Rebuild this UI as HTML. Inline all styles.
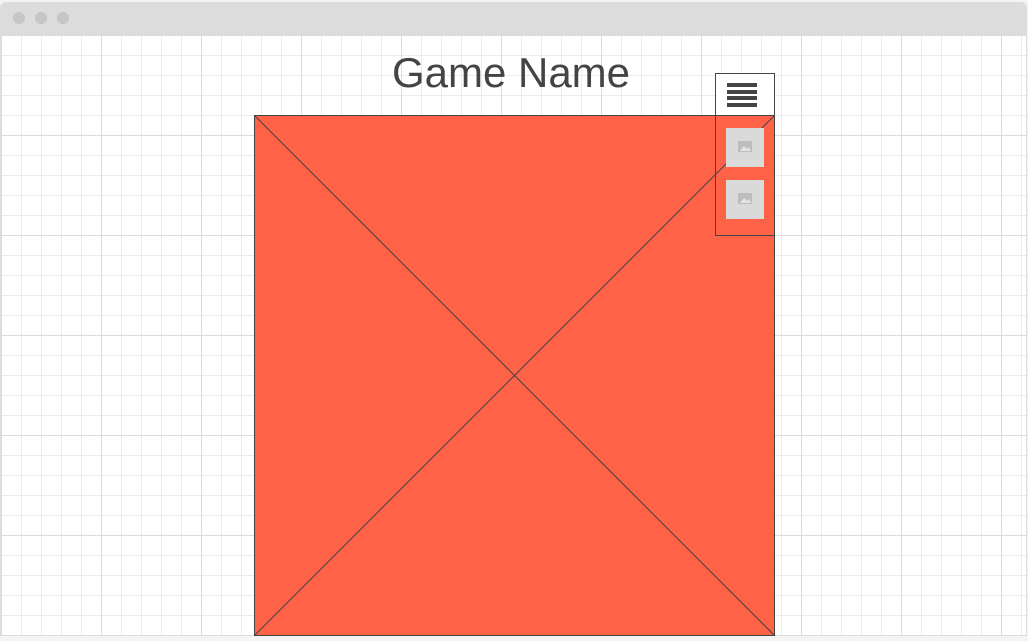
<!DOCTYPE html>
<html><head><style>
html,body{margin:0;padding:0;width:1028px;height:641px;overflow:hidden;background:#f4f4f4;font-family:"Liberation Sans",sans-serif}
.win{position:absolute;left:0;top:2px;width:1027px;height:634px;border-radius:6px 6px 0 0;background:#fff;overflow:hidden;border-left:1px solid #ddd;border-right:1px solid #ddd;box-sizing:border-box}
.bar{position:absolute;left:0;top:0;right:0;height:33px;background:#dcdcdc}
.dot{position:absolute;top:10px;width:12px;height:12px;border-radius:50%;background:#c6c6c6}
.grid{position:absolute;left:0;top:33px;right:0;bottom:0;
background-image:
linear-gradient(to right,#dcdcdc 1px,transparent 1px),
linear-gradient(to bottom,#dcdcdc 1px,transparent 1px),
linear-gradient(to right,#ececec 1px,transparent 1px),
linear-gradient(to bottom,#ececec 1px,transparent 1px);
background-size:100px 100px,100px 100px,20px 20px,20px 20px;
background-position:0 0,0 0,0 0,0 0}
.title{position:absolute;left:0;width:1022px;top:49px;text-align:center;font-size:42px;color:#444}
</style></head><body>
<div class="win">
<div class="bar"><div class="dot" style="left:12px"></div><div class="dot" style="left:34px"></div><div class="dot" style="left:56px"></div></div>
<div class="grid"></div>
</div>
<div class="title">Game Name</div>
<svg style="position:absolute;left:0;top:0" width="1028" height="641">
<rect x="254.5" y="115.5" width="520" height="520" fill="#ff6347" stroke="#444"/>
<line x1="255" y1="116" x2="774" y2="635" stroke="#444"/>
<line x1="774" y1="116" x2="255" y2="635" stroke="#444"/>
<rect x="715.5" y="73.5" width="59" height="42" fill="#fff" stroke="#444"/>
<rect x="715.5" y="115.5" width="59" height="120" fill="none" stroke="#444"/>
<g fill="#444"><rect x="727" y="83" width="30" height="4"/><rect x="727" y="90" width="30" height="4"/><rect x="727" y="96" width="30" height="4"/><rect x="727" y="103" width="30" height="4"/></g>
<rect x="726" y="128" width="38" height="39" fill="#dadada"/>
<rect x="726" y="180" width="38" height="39" fill="#dadada"/>
<g fill="#bdbdbd">
<rect x="738" y="141" width="14" height="11"/><rect x="738" y="193" width="14" height="11"/>
</g>
<g fill="#e4e4e4">
<path d="M740 151 L744 146 L747 149 L749 147 L751 151Z"/><path d="M740 203 L744 198 L747 201 L749 199 L751 203Z"/>
</g>
</svg>
</body></html>
